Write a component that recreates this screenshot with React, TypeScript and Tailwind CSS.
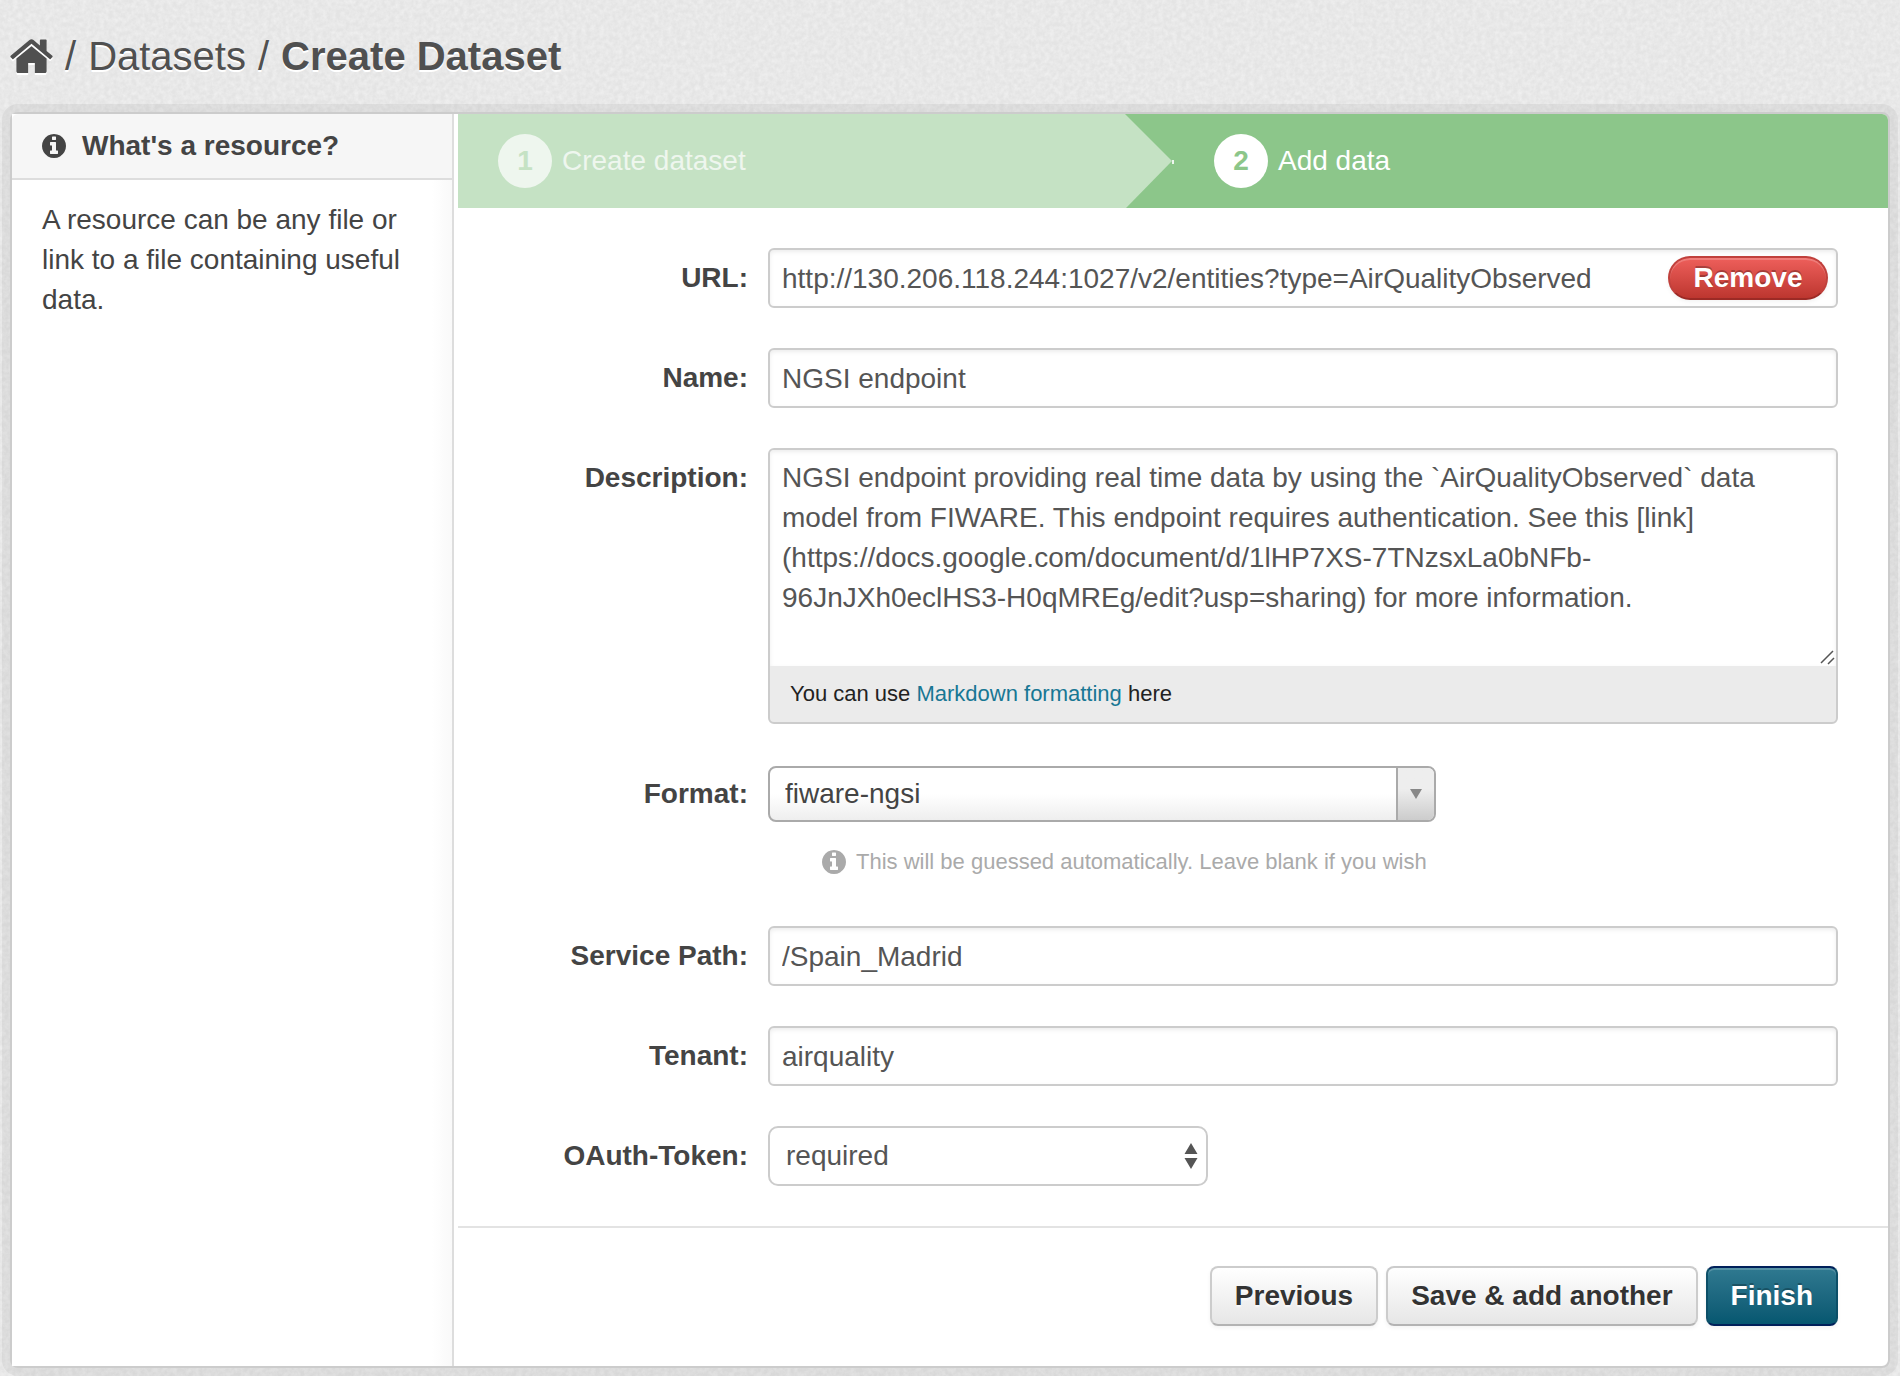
import type { ReactNode } from "react";

const inputStyle =
  "block h-[60px] w-full rounded-md border-2 border-[#ccc] bg-white px-3 pt-0.5 text-[28px] text-[#555] shadow-[inset_0_2px_4px_rgba(0,0,0,0.075)] outline-none";

const buttonStyle =
  "h-[60px] rounded-lg border-2 border-[#ccc] border-b-[#b3b3b3] bg-linear-to-b from-white to-[#e6e6e6] px-[23px] text-[#333] shadow-[0_2px_4px_rgba(0,0,0,0.05)] [text-shadow:0_2px_2px_rgba(255,255,255,0.75)]";

function HomeIcon() {
  return (
    <svg viewBox="16 240 1632 1296" className="h-[34px] w-[43px] drop-shadow-[0_2px_0_#fff]" fill="currentColor" aria-hidden="true">
      <path d="M1408 992v480q0 26-19 45t-45 19h-384v-384h-256v384h-384q-26 0-45-19t-19-45v-480q0-1 .5-3t.5-3l575-474 575 474q1 2 1 6zm223-69l-62 74q-8 9-21 11h-3q-13 0-21-7l-692-577-692 577q-12 8-24 7-13-2-21-11l-62-74q-8-10-7-23.5t11-21.5l719-599q32-26 76-26t76 26l244 204v-195q0-14 9-23t23-9h192q14 0 23 9t9 23v408l219 182q10 8 11 21.5t-7 23.5z" />
    </svg>
  );
}

function InfoIcon() {
  return (
    <svg viewBox="128 128 1536 1536" className="size-6 shrink-0" fill="currentColor" aria-hidden="true">
      <path d="M1152 1376v-160q0-14-9-23t-23-9h-96v-512q0-14-9-23t-23-9h-320q-14 0-23 9t-9 23v160q0 14 9 23t23 9h96v320h-96q-14 0-23 9t-9 23v160q0 14 9 23t23 9h448q14 0 23-9t9-23zm-128-896v-160q0-14-9-23t-23-9h-192q-14 0-23 9t-9 23v160q0 14 9 23t23 9h192q14 0 23-9t9-23zm640 416q0 209-103 385.5t-279.5 279.5-385.5 103-385.5-103-279.5-279.5-103-385.5 103-385.5 279.5-279.5 385.5-103 385.5 103 279.5 279.5 103 385.5z" />
    </svg>
  );
}

/* Fine paper grain behind the whole page */
function PaperGrain() {
  return (
    <svg className="absolute inset-0 -z-10 h-full w-full" aria-hidden="true">
      <filter id="grain">
        <feTurbulence type="fractalNoise" baseFrequency="0.22" numOctaves="3" seed="4" />
        <feColorMatrix values="0 0 0 0 1  0 0 0 0 1  0 0 0 0 1  0.7 0 0 0 -0.2" />
      </filter>
      <rect width="100%" height="100%" filter="url(#grain)" />
    </svg>
  );
}

function Row({ id, label, children }: { id: string; label: string; children: ReactNode }) {
  return (
    <div className="grid grid-cols-[290px_minmax(0,1fr)] gap-5">
      <label htmlFor={id} className="text-right font-bold leading-[60px] text-[#444]">
        {label}
      </label>
      <div>{children}</div>
    </div>
  );
}

export default function App() {
  return (
    <div className="relative isolate min-h-screen bg-[#e4e4e4] px-2.5 pb-2 font-['Liberation_Sans',Arial,sans-serif] text-[28px] leading-10 text-[#444]">
      <PaperGrain />
      <nav aria-label="Breadcrumb" className="flex h-28 items-center pb-px text-[40px] text-[#505050] [text-shadow:0_2px_0_#fff]">
        <ol className="flex items-center gap-3">
          <li>
            <a href="#home" aria-label="Home">
              <HomeIcon />
            </a>
          </li>
          <li aria-hidden="true">/</li>
          <li>
            <a href="#datasets">Datasets</a>
          </li>
          <li aria-hidden="true">/</li>
          <li className="font-bold">Create Dataset</li>
        </ol>
      </nav>

      <div className="flex rounded-lg border-2 border-[#ccc] bg-white shadow-[0_0_0_8px_rgba(0,0,0,0.05)]">
        <aside className="w-[442px] shrink-0 border-r-2 border-[#ddd] bg-linear-to-l from-[#f9f9f9] to-white to-[20px]">
          <h2 className="flex h-[66px] items-center gap-4 rounded-tl-md border-b-2 border-[#ddd] bg-[#f6f6f6] px-[30px] font-bold">
            <InfoIcon />
            What's a resource?
          </h2>
          <p className="py-5 pl-[30px] pr-10">A resource can be any file or link to a file containing useful data.</p>
        </aside>

        <main className="ml-1 min-w-0 flex-1">
          <ol className="flex h-[94px] rounded-tr-md bg-[#8cc68a] text-white">
            <li className="flex flex-1 items-center gap-2.5 bg-[#c5e2c4] pl-10 text-[#eef6ee] [clip-path:polygon(0_0,calc(100%-47px)_0,100%_50%,calc(100%-46px)_100%,0_100%)]">
              <span className="flex size-[54px] items-center justify-center rounded-full bg-[#eef6ee] font-bold text-[#c5e2c4]">1</span>
              Create dataset
            </li>
            <li className="relative flex flex-1 items-center gap-2.5 pl-[42px]">
              <span className="absolute left-0 top-[46px] h-1 w-0.5 bg-[#eef6ee]" />
              <span className="flex size-[54px] items-center justify-center rounded-full bg-white font-bold text-[#8cc68a]">2</span>
              Add data
            </li>
          </ol>

          <form onSubmit={(e) => e.preventDefault()}>
            <div className="flex flex-col gap-10 py-10 pr-[50px]">
              <Row id="url" label="URL:">
                <div className="relative">
                  <input id="url" type="text" className={inputStyle} defaultValue="http://130.206.118.244:1027/v2/entities?type=AirQualityObserved" />
                  <button
                    type="button"
                    className="absolute right-2.5 top-2 h-11 w-40 rounded-full border-2 border-[#c0403c] border-b-[#9c2a25] bg-linear-to-b from-[#ee5f5b] to-[#bd362f] font-bold leading-9 text-white shadow-[inset_0_2px_0_rgba(255,255,255,0.2),0_2px_4px_rgba(0,0,0,0.05)] [text-shadow:0_-2px_0_rgba(0,0,0,0.25)]"
                  >
                    Remove
                  </button>
                </div>
              </Row>

              <Row id="name" label="Name:">
                <input id="name" type="text" className={inputStyle} defaultValue="NGSI endpoint" />
              </Row>

              <Row id="description" label="Description:">
                <div className="relative overflow-hidden rounded-md border-2 border-[#ccc] bg-[#ebebeb]">
                  <textarea
                    id="description"
                    className="block h-[216px] w-full resize-none bg-white py-2 pl-3 pr-16 text-[28px] leading-10 text-[#555] shadow-[inset_0_2px_4px_rgba(0,0,0,0.075)] outline-none"
                    defaultValue="NGSI endpoint providing real time data by using the `AirQualityObserved` data model from FIWARE. This endpoint requires authentication. See this [link](https://docs.google.com/document/d/1lHP7XS-7TNzsxLa0bNFb-96JnJXh0eclHS3-H0qMREg/edit?usp=sharing) for more information."
                  />
                  <svg viewBox="0 0 16 16" className="pointer-events-none absolute right-px top-[199px] size-4" stroke="#555" strokeWidth="1.5" aria-hidden="true">
                    <path d="M2 14L14 2M9 15l6-6" />
                  </svg>
                  <p className="px-5 py-2 text-[22px] text-[#222]">
                    You can use{" "}
                    <a href="#markdown" className="text-[#187794]">
                      Markdown formatting
                    </a>{" "}
                    here
                  </p>
                </div>
              </Row>

              <Row id="format" label="Format:">
                <div className="relative mt-0.5 w-[668px] max-w-full">
                  <select
                    id="format"
                    className="block h-14 w-full appearance-none rounded-lg border-2 border-[#aaa] bg-linear-to-t from-[#eee] to-white to-50% px-[15px] text-[28px] text-[#444] outline-none"
                  >
                    <option>fiware-ngsi</option>
                  </select>
                  <span className="pointer-events-none absolute inset-y-0.5 right-0.5 flex w-[38px] items-center justify-center rounded-r-md border-l-2 border-[#aaa] bg-linear-to-t from-[#ccc] to-[#eee] to-60%">
                    <svg viewBox="0 0 12 10" className="h-2.5 w-3" fill="#888" aria-hidden="true">
                      <path d="M0 0h12L6 10z" />
                    </svg>
                  </span>
                </div>
                <p className="mb-1 mt-5 flex items-center gap-2.5 pl-[54px] text-[22px] text-[#aaa]">
                  <InfoIcon />
                  This will be guessed automatically. Leave blank if you wish
                </p>
              </Row>

              <Row id="service-path" label="Service Path:">
                <input id="service-path" type="text" className={inputStyle} defaultValue="/Spain_Madrid" />
              </Row>

              <Row id="tenant" label="Tenant:">
                <input id="tenant" type="text" className={inputStyle} defaultValue="airquality" />
              </Row>

              <Row id="oauth" label="OAuth-Token:">
                <div className="relative w-[440px] max-w-full">
                  <select id="oauth" className="block h-[60px] w-full appearance-none rounded-[10px] border-2 border-[#ccc] bg-white px-4 text-[28px] text-[#555] outline-none">
                    <option>required</option>
                  </select>
                  <svg viewBox="0 0 14 26" className="pointer-events-none absolute right-2.5 top-[17px] h-[26px] w-3.5" fill="#555" aria-hidden="true">
                    <path d="M7 0l6.5 11H.5zM7 26L.5 15h13z" />
                  </svg>
                </div>
              </Row>
            </div>

            <div className="flex justify-end gap-2 border-t-2 border-[#e3e3e3] pb-10 pr-[50px] pt-[38px] font-bold">
              <button type="button" className={buttonStyle}>
                Previous
              </button>
              <button type="button" className={buttonStyle}>
                Save &amp; add another
              </button>
              <button
                type="submit"
                className="h-[60px] rounded-lg border-2 border-x-[#0c4f68] border-y-[#00205a] bg-linear-to-b from-[#2f7990] to-[#055770] px-[23px] text-white shadow-[inset_0_2px_0_rgba(255,255,255,0.2),0_2px_4px_rgba(0,0,0,0.05)] [text-shadow:0_-2px_0_rgba(0,0,0,0.25)]"
              >
                Finish
              </button>
            </div>
          </form>
        </main>
      </div>
    </div>
  );
}
